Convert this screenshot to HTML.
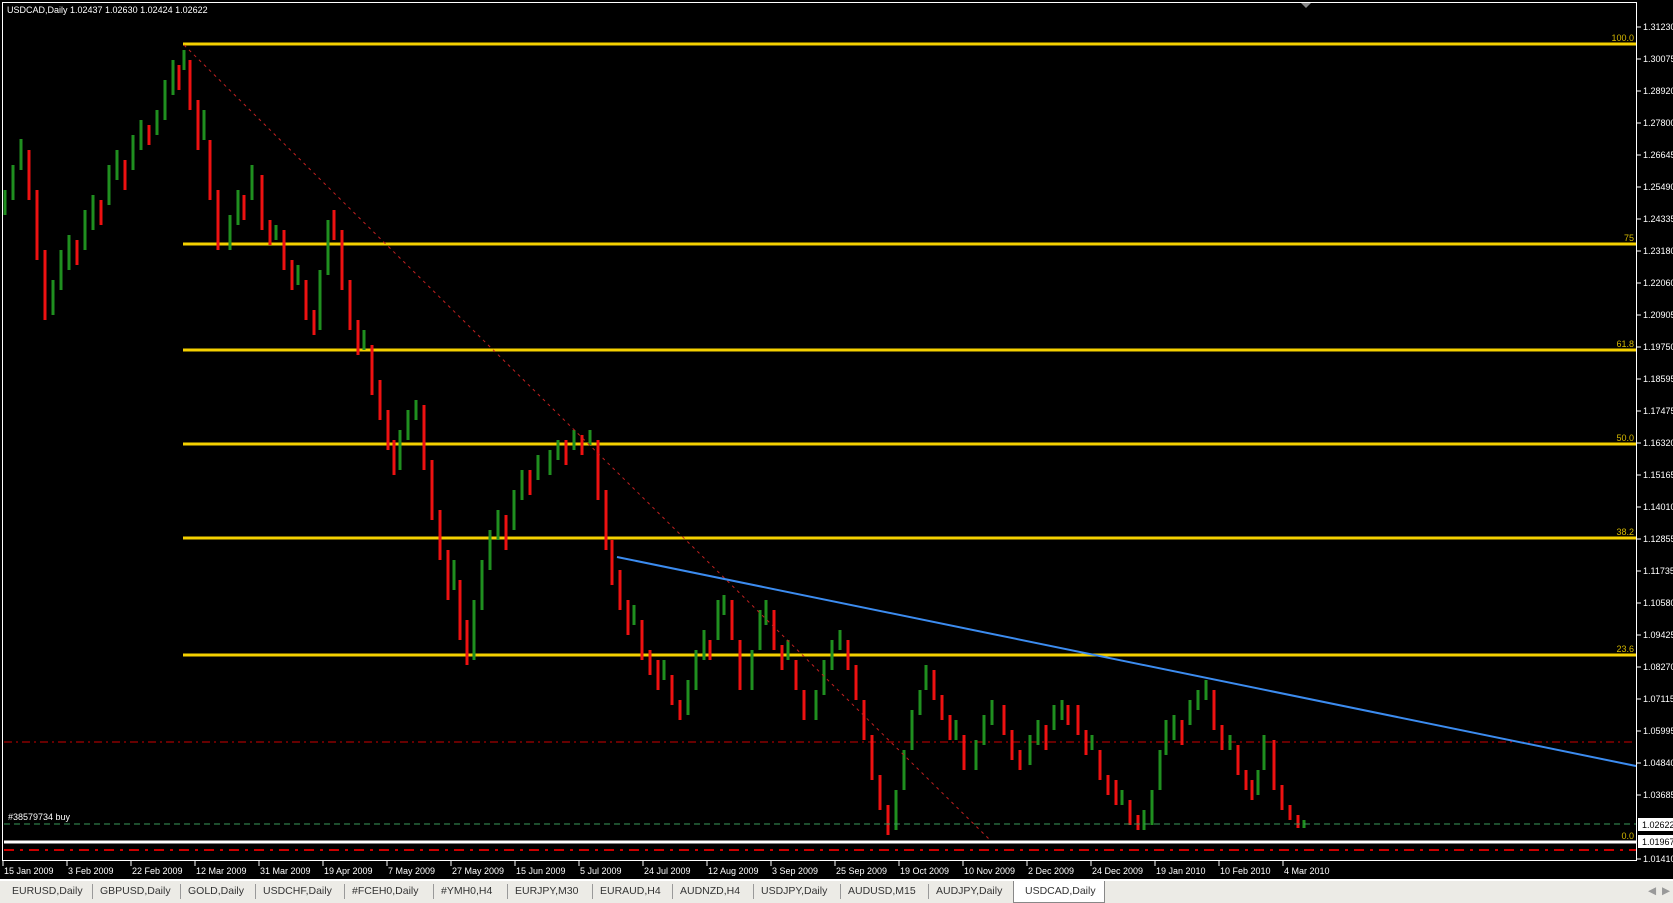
<!DOCTYPE html>
<html><head><meta charset="utf-8"><style>
html,body{margin:0;padding:0;background:#000;width:1673px;height:903px;overflow:hidden;font-family:"Liberation Sans",sans-serif}
svg{position:absolute;left:0;top:0}
#tabs{position:absolute;left:0;top:879px;width:1673px;height:24px;background:#ecebe6;border-top:2px solid #fff;box-sizing:border-box;font-size:10.5px;color:#333}
.t{position:absolute;top:4px;white-space:nowrap}
.s{position:absolute;top:3px;width:1px;height:15px;background:#999}
.act{position:absolute;left:1013px;top:0;width:92px;height:22px;background:#fff;border:1px solid #888;border-top:none;box-sizing:border-box}
</style></head><body>
<svg width="1673" height="880" xmlns="http://www.w3.org/2000/svg" font-family="Liberation Sans, sans-serif" font-size="9">
<rect x="2.5" y="2.5" width="1634" height="858" fill="none" stroke="#fff"/>
<g fill="#fff">
<text x="7" y="13">USDCAD,Daily  1.02437 1.02630 1.02424 1.02622</text>
<text x="1643" y="30">1.31230</text><text x="1643" y="62">1.30075</text><text x="1643" y="94">1.28920</text><text x="1643" y="126">1.27800</text><text x="1643" y="158">1.26645</text><text x="1643" y="190">1.25490</text><text x="1643" y="222">1.24335</text><text x="1643" y="254">1.23180</text><text x="1643" y="286">1.22060</text><text x="1643" y="318">1.20905</text><text x="1643" y="350">1.19750</text><text x="1643" y="382">1.18595</text><text x="1643" y="414">1.17475</text><text x="1643" y="446">1.16320</text><text x="1643" y="478">1.15165</text><text x="1643" y="510">1.14010</text><text x="1643" y="542">1.12855</text><text x="1643" y="574">1.11735</text><text x="1643" y="606">1.10580</text><text x="1643" y="638">1.09425</text><text x="1643" y="670">1.08270</text><text x="1643" y="702">1.07115</text><text x="1643" y="734">1.05995</text><text x="1643" y="766">1.04840</text><text x="1643" y="798">1.03685</text><text x="1643" y="862">1.01410</text>
</g>
<path d="M1637 27h4M1637 59h4M1637 91h4M1637 123h4M1637 155h4M1637 187h4M1637 219h4M1637 251h4M1637 283h4M1637 315h4M1637 347h4M1637 379h4M1637 411h4M1637 443h4M1637 475h4M1637 507h4M1637 539h4M1637 571h4M1637 603h4M1637 635h4M1637 667h4M1637 699h4M1637 731h4M1637 763h4M1637 795h4M1637 859h4" stroke="#fff"/>
<rect x="1638" y="818" width="35" height="13" fill="#fff"/><text x="1642" y="828" fill="#000">1.02622</text>
<rect x="1638" y="835" width="35" height="13" fill="#fff"/><text x="1642" y="845" fill="#000">1.01967</text>
<line x1="4" y1="742" x2="1636" y2="742" stroke="#c00" stroke-dasharray="8 4 2 4"/>
<line x1="4" y1="850" x2="1636" y2="850" stroke="#c00" stroke-width="2" stroke-dasharray="10 6 3 6"/>
<g stroke="#f5d000" stroke-width="3">
<line x1="183" y1="44" x2="1636" y2="44"/><line x1="183" y1="244" x2="1636" y2="244"/><line x1="183" y1="350" x2="1636" y2="350"/><line x1="183" y1="444" x2="1636" y2="444"/><line x1="183" y1="538" x2="1636" y2="538"/><line x1="183" y1="655" x2="1636" y2="655"/>
</g>
<line x1="4" y1="842" x2="1636" y2="842" stroke="#fff" stroke-width="3"/>
<g fill="#d4b800" font-size="9" text-anchor="end">
<text x="1634" y="41">100.0</text><text x="1634" y="241">75</text><text x="1634" y="347">61.8</text><text x="1634" y="441">50.0</text><text x="1634" y="535">38.2</text><text x="1634" y="652">23.6</text><text x="1634" y="839">0.0</text>
</g>
<path stroke="#1f8f1f" stroke-width="3" fill="none" d="M5 190V215M13 165V200M21 139V170M53 280V315M61 250V290M69 235V270M85 210V250M93 195V230M109 165V205M117 150V180M133 135V170M141 120V150M157 110V135M165 80V120M173 60V95M184 50V70M204 110V140M230 215V250M238 190V225M252 165V200M276 225V240M298 265V285M320 270V330M328 220V275M364 330V350M400 430V470M408 410V440M416 400V420M454 560V590M474 600V660M482 560V610M490 530V570M498 510V540M514 490V530M522 470V500M538 455V480M550 450V475M558 440V460M574 430V450M590 430V445M634 605V625M664 660V680M688 680V715M696 650V690M704 630V660M718 600V640M724 595V615M752 650V690M760 610V650M766 600V625M788 640V660M816 690V720M824 660V695M832 640V670M840 630V650M896 790V830M904 750V790M912 710V750M920 690V715M926 665V690M956 720V740M976 740V770M984 715V745M992 700V725M1030 735V765M1038 720V745M1054 705V730M1062 700V720M1092 735V750M1122 790V805M1144 810V830M1152 790V825M1160 750V790M1166 720V755M1174 715V740M1190 700V725M1198 690V710M1206 680V700M1230 735V750M1258 770V795M1264 735V770M1304 820V828"/>
<path stroke="#ee1111" stroke-width="3" fill="none" d="M29 150V200M37 190V260M45 250V320M77 240V265M101 200V225M125 160V190M149 125V145M179 65V90M190 60V110M198 100V150M210 140V200M218 190V250M244 195V220M262 175V230M270 220V245M284 230V270M292 260V290M306 280V320M314 310V335M334 210V240M342 230V290M350 280V330M358 320V355M372 345V395M380 380V420M388 410V450M394 440V475M424 405V470M432 460V520M440 510V560M448 550V600M460 580V640M467 620V665M506 515V550M530 470V495M566 440V465M582 435V455M598 440V500M606 490V550M612 540V585M620 570V610M628 600V635M642 620V660M650 650V675M658 660V690M672 675V705M680 700V720M710 640V660M732 600V640M740 640V690M774 610V650M782 645V670M796 660V690M804 690V720M848 640V670M856 665V700M864 700V740M872 735V780M880 775V810M888 805V835M934 670V700M942 695V720M950 715V740M964 735V770M1004 705V735M1012 730V760M1020 750V770M1046 725V750M1068 705V725M1078 705V735M1086 730V755M1100 750V780M1108 775V795M1116 780V805M1130 800V825M1138 815V830M1182 720V745M1214 690V730M1222 725V750M1238 745V775M1246 770V790M1252 780V800M1274 740V790M1282 785V810M1290 805V820M1298 815V828"/>
<line x1="184" y1="45" x2="990" y2="840" stroke="#c02020" stroke-dasharray="3 4"/>
<line x1="617" y1="557" x2="1636" y2="766" stroke="#3c8cf0" stroke-width="2"/>
<line x1="4" y1="824" x2="1636" y2="824" stroke="#3a9a5a" stroke-dasharray="6 4"/>
<text x="8" y="820" fill="#fff">#38579734 buy</text>
<polygon points="1301,3 1311,3 1306,8" fill="#888"/>
<path stroke="#fff" d="M3 861v5M67 861v5M131 861v5M195 861v5M259 861v5M323 861v5M387 861v5M451 861v5M515 861v5M579 861v5M643 861v5M707 861v5M771 861v5M835 861v5M899 861v5M963 861v5M1027 861v5M1091 861v5M1155 861v5M1219 861v5M1283 861v5"/>
<g fill="#fff">
<text x="4" y="874">15 Jan 2009</text><text x="68" y="874">3 Feb 2009</text><text x="132" y="874">22 Feb 2009</text><text x="196" y="874">12 Mar 2009</text><text x="260" y="874">31 Mar 2009</text><text x="324" y="874">19 Apr 2009</text><text x="388" y="874">7 May 2009</text><text x="452" y="874">27 May 2009</text><text x="516" y="874">15 Jun 2009</text><text x="580" y="874">5 Jul 2009</text><text x="644" y="874">24 Jul 2009</text><text x="708" y="874">12 Aug 2009</text><text x="772" y="874">3 Sep 2009</text><text x="836" y="874">25 Sep 2009</text><text x="900" y="874">19 Oct 2009</text><text x="964" y="874">10 Nov 2009</text><text x="1028" y="874">2 Dec 2009</text><text x="1092" y="874">24 Dec 2009</text><text x="1156" y="874">19 Jan 2010</text><text x="1220" y="874">10 Feb 2010</text><text x="1284" y="874">4 Mar 2010</text>
</g>
</svg>
<div id="tabs">
<div class="act"></div>
<span class="t" style="left:12px">EURUSD,Daily</span>
<span class="s" style="left:92px"></span><span class="t" style="left:100px">GBPUSD,Daily</span>
<span class="s" style="left:180px"></span><span class="t" style="left:188px">GOLD,Daily</span>
<span class="s" style="left:255px"></span><span class="t" style="left:263px">USDCHF,Daily</span>
<span class="s" style="left:344px"></span><span class="t" style="left:352px">#FCEH0,Daily</span>
<span class="s" style="left:433px"></span><span class="t" style="left:441px">#YMH0,H4</span>
<span class="s" style="left:507px"></span><span class="t" style="left:515px">EURJPY,M30</span>
<span class="s" style="left:592px"></span><span class="t" style="left:600px">EURAUD,H4</span>
<span class="s" style="left:672px"></span><span class="t" style="left:680px">AUDNZD,H4</span>
<span class="s" style="left:753px"></span><span class="t" style="left:761px">USDJPY,Daily</span>
<span class="s" style="left:840px"></span><span class="t" style="left:848px">AUDUSD,M15</span>
<span class="s" style="left:928px"></span><span class="t" style="left:936px">AUDJPY,Daily</span>
<span class="t" style="left:1025px">USDCAD,Daily</span>
<span class="t" style="left:1648px;color:#999">&#9664;</span><span class="t" style="left:1662px;color:#999">&#9654;</span>
</div>
</body></html>
